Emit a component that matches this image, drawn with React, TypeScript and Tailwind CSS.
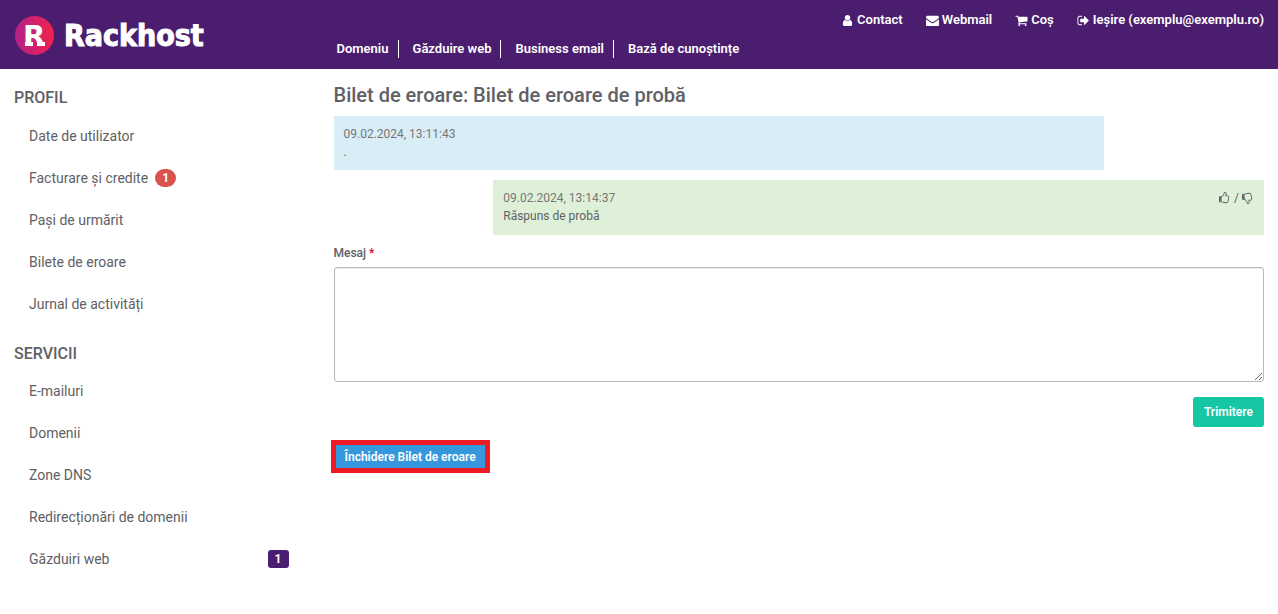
import type { ReactNode } from "react";

function Icon({ d, className }: { d: string; className: string }) {
  return (
    <svg viewBox="0 0 1792 1792" fill="currentColor" aria-hidden="true" className={className}>
      <path d={d} />
    </svg>
  );
}

const icons = {
  user: "M1536 1399q0 109-62.5 187t-150.5 78h-854q-88 0-150.5-78t-62.5-187q0-85 8.5-160.5t31.5-152 58.5-131 94-89 134.5-34.5q131 128 313 128t313-128q76 0 134.5 34.5t94 89 58.5 131 31.5 152 8.5 160.5zm-256-887q0 159-112.5 271.5t-271.5 112.5-271.5-112.5-112.5-271.5 112.5-271.5 271.5-112.5 271.5 112.5 112.5 271.5z",
  envelope:
    "M1792 710v794q0 66-47 113t-113 47h-1472q-66 0-113-47t-47-113v-794q44 49 101 87 362 246 497 345 57 42 92.5 65.5t94.5 48 110 24.5h2q51 0 110-24.5t94.5-48 92.5-65.5q170-123 498-345 57-39 100-87zm0-294q0 79-49 151t-122 123q-376 261-468 325-10 7-42.5 31t-54 38.5-52 32.5-57.5 27-50 9h-2q-23 0-50-9t-57.5-27-52-32.5-54-38.5-42.5-31q-91-64-262-182.5t-205-142.5q-62-42-117-115.5t-55-136.5q0-78 41.5-130t118.5-52h1472q65 0 112.5 47t47.5 113z",
  cart: "M704 1536q0 52-38 90t-90 38-90-38-38-90 38-90 90-38 90 38 38 90zm896 0q0 52-38 90t-90 38-90-38-38-90 38-90 90-38 90 38 38 90zm128-1088v512q0 24-16.5 42.5t-40.5 21.5l-1044 122q13 60 13 70 0 16-24 64h920q26 0 45 19t19 45-19 45-45 19h-1024q-26 0-45-19t-19-45q0-11 8-31.5t16-36 21.5-40 15.5-29.5l-177-823h-204q-26 0-45-19t-19-45 19-45 45-19h256q16 0 28.5 6.5t19.5 15.5 13 24.5 8 26 5.5 29.5 4.5 26h1201q26 0 45 19t19 45z",
  signOut:
    "M704 1440q0 4 1 20t.5 26.5-3 23.5-10 19.5-20.5 6.5h-320q-119 0-203.5-84.5t-84.5-203.5v-704q0-119 84.5-203.5t203.5-84.5h320q13 0 22.5 9.5t9.5 22.5q0 4 1 20t.5 26.5-3 23.5-10 19.5-20.5 6.5h-320q-66 0-113 47t-47 113v704q0 66 47 113t113 47h312l11.5 1 11.5 3 8 5.5 7 9 2 13.5zm928-544q0 26-19 45l-544 544q-19 19-45 19t-45-19-19-45v-288h-448q-26 0-45-19t-19-45v-384q0-26 19-45t45-19h448v-288q0-26 19-45t45-19 45 19l544 544q19 19 19 45z",
  thumb: "M256 1344q0-26-19-45t-45-19-45 19-19 45 19 45 45 19 45-19 19-45zm1152-576q0-51-39-89.5t-89-38.5h-352q0-58 48-159.5t48-160.5q0-98-32-145t-128-47q-26 26-38 85t-30.5 125.5-59.5 109.5q-22 23-77 91-4 5-23 30t-31.5 41-34.5 42.5-40 44-38.5 35.5-40 27-35.5 9h-32v640h32q13 0 31.5 3t33 6.5 38 11 35 11.5 35.5 12.5 29 10.5q211 73 342 73h121q192 0 192-167 0-26-5-56 30-16 47.5-52.5t17.5-73.5-18-69q53-50 53-119 0-25-10-55.5t-25-47.5q32-1 53.5-47t21.5-81zm128-1q0 89-49 163 9 33 9 69 0 77-38 144 3 21 3 43 0 101-60 178 1 139-85 219.5t-227 80.5h-129q-96 0-189.5-22.5t-216.5-65.5q-116-40-138-40h-288q-53 0-90.5-37.5t-37.5-90.5v-640q0-53 37.5-90.5t90.5-37.5h274q36-24 137-155 58-75 107-128 24-25 35.5-85.5t30.5-126.5 62-108q39-37 90-37 84 0 151 32.5t102 101.5 35 186q0 93-48 192h176q104 0 180 76t76 179z",
};

const userLinks = [
  { icon: icons.user, label: "Contact" },
  { icon: icons.envelope, label: "Webmail" },
  { icon: icons.cart, label: "Coș" },
  { icon: icons.signOut, label: "Ieșire (exemplu@exemplu.ro)" },
];

const mainLinks = ["Domeniu", "Găzduire web", "Business email", "Bază de cunoștințe"];

function LogoMark() {
  return (
    <svg viewBox="0 0 39 39" className="size-[39px]" aria-hidden="true">
      <defs>
        <linearGradient id="mark">
          <stop offset="0" stopColor="#b4218c" />
          <stop offset="1" stopColor="#f0234b" />
        </linearGradient>
      </defs>
      <circle cx="19.5" cy="19.5" r="19.5" fill="url(#mark)" />
      <text x="8" y="30" fill="#fff" className="font-['DejaVu_Sans'] text-[29px] font-bold">
        R
      </text>
      {/* feet of the letter */}
      <path d="M10 26h8v4h-8zM22 26h8v4h-8z" fill="#fff" />
    </svg>
  );
}

function Header() {
  return (
    <header className="flex min-h-[69px] bg-[#4a1d6e] text-[13px] font-semibold leading-[18px] text-white">
      <div className="w-1/4 px-[15px] pt-4">
        <a href="#" className="flex items-center gap-[10px]">
          <LogoMark />
          <span className="font-['DejaVu_Sans_Condensed','DejaVu_Sans',sans-serif] text-[30px] font-bold leading-[39px] [-webkit-text-stroke:1px_white]">
            Rackhost
          </span>
        </a>
      </div>
      <div className="flex w-3/4 flex-col justify-between pr-[14px] pt-[11px] pb-[11px]">
        <nav className="flex justify-end gap-[23px]">
          {userLinks.map((link) => (
            <a key={link.label} href="#" className="flex items-center gap-[3px]">
              <Icon d={link.icon} className="size-[13px]" />
              {link.label}
            </a>
          ))}
        </nav>
        <nav className="flex gap-1 pl-[7px]">
          {mainLinks.map((label) => (
            <a key={label} href="#" className="border-r border-white pr-[9px] pl-[10px] last:border-0">
              {label}
            </a>
          ))}
        </nav>
      </div>
    </header>
  );
}

function SideItem({ label, children }: { label: string; children?: ReactNode }) {
  return (
    <li>
      <a href="#" className="flex items-center py-[11px] pr-4 pl-[15px] text-sm leading-5">
        {label}
        {children}
      </a>
    </li>
  );
}

function Sidebar() {
  return (
    <aside className="w-1/4 pt-[19px] pr-[15px] pl-[14px]">
      <h2 className="text-base font-medium leading-5">PROFIL</h2>
      <ul className="mt-[7px]">
        <SideItem label="Date de utilizator" />
        <SideItem label="Facturare și credite">
          <span className="ml-[7px] rounded-full bg-[#d9534f] px-[7px] text-xs font-bold leading-[18px] text-white">
            1
          </span>
        </SideItem>
        <SideItem label="Pași de urmărit" />
        <SideItem label="Bilete de eroare" />
        <SideItem label="Jurnal de activități" />
      </ul>
      <h2 className="mt-[19px] text-base font-medium leading-5">SERVICII</h2>
      <ul className="mt-[6px]">
        <SideItem label="E-mailuri" />
        <SideItem label="Domenii" />
        <SideItem label="Zone DNS" />
        <SideItem label="Redirecționări de domenii" />
        <SideItem label="Găzduiri web">
          <span className="ml-auto rounded-[3px] bg-[#4a1d6e] px-[7px] text-xs font-bold leading-[18px] text-white">
            1
          </span>
        </SideItem>
      </ul>
    </aside>
  );
}

function Ticket() {
  return (
    <main className="w-3/4 pt-[14px] text-xs leading-[18px]">
      <h1 className="px-[14px] text-xl font-medium leading-6">Bilet de eroare: Bilet de eroare de probă</h1>

      <div className="mt-[9px] w-5/6 px-[14px]">
        <div className="bg-[#d9edf7] px-[10px] py-[9px]">
          <time className="block text-[#777777]">09.02.2024, 13:11:43</time>
          <p>.</p>
        </div>
      </div>

      <div className="mt-[10px] ml-auto w-5/6 px-[14px]">
        <div className="flex items-start justify-between bg-[#dff0d8] px-[10px] pt-[9px] pb-[10px]">
          <div>
            <time className="block text-[#777777]">09.02.2024, 13:14:37</time>
            <p>Răspuns de probă</p>
          </div>
          <div className="flex items-center gap-[3px]">
            <button type="button" aria-label="Util">
              <Icon d={icons.thumb} className="size-3" />
            </button>
            /
            <button type="button" aria-label="Inutil">
              <Icon d={icons.thumb} className="size-3 -scale-y-100" />
            </button>
          </div>
        </div>
      </div>

      <form className="mt-[9px] px-[14px]">
        <label htmlFor="message" className="block font-medium">
          Mesaj <span className="text-[#e4002b]">*</span>
        </label>
        <textarea
          id="message"
          className="mt-[5px] block h-[115px] w-full rounded-[3px] border border-[#bbbbbb] bg-white p-2 shadow-[inset_0_1px_1px_rgba(0,0,0,0.08)]"
        />
        <div className="mt-[15px] flex justify-end">
          <button type="submit" className="rounded-[3px] bg-[#15c7a5] px-[11px] py-[6px] font-semibold text-white">
            Trimitere
          </button>
        </div>
      </form>

      <div className="mt-[13px] px-[11px]">
        <button
          type="button"
          className="border-5 border-[#ed1c24] bg-[#3598dc] px-[9px] pt-[3px] pb-[2px] font-semibold leading-[18px] text-white"
        >
          Închidere Bilet de eroare
        </button>
      </div>
    </main>
  );
}

export default function App() {
  return (
    <div className="min-h-screen bg-white font-['Roboto',sans-serif] text-[#606065]">
      <Header />
      <div className="flex">
        <Sidebar />
        <Ticket />
      </div>
    </div>
  );
}
